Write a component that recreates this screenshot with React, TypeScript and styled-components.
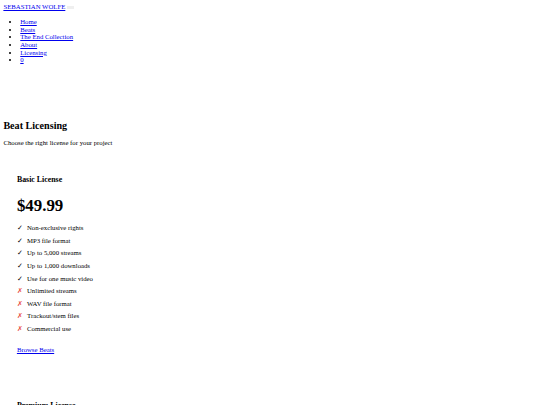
import React from "react";
import styled, { createGlobalStyle } from "styled-components";

const GlobalStyle = createGlobalStyle`
  html {
    zoom: 0.421875;
  }
  body {
    margin: 8px;
    font-family: "Liberation Serif", "Times New Roman", serif;
    font-size: 16px;
    color: #000;
    background: #fff;
  }
  a {
    color: #0000ee;
  }
`;

type Feature = { label: string; included: boolean };

const basicFeatures: Feature[] = [
  { label: "Non-exclusive rights", included: true },
  { label: "MP3 file format", included: true },
  { label: "Up to 5,000 streams", included: true },
  { label: "Up to 1,000 downloads", included: true },
  { label: "Use for one music video", included: true },
  { label: "Unlimited streams", included: false },
  { label: "WAV file format", included: false },
  { label: "Trackout/stem files", included: false },
  { label: "Commercial use", included: false },
];

const App: React.FC = () => {
  return (
    <>
      <GlobalStyle />
      <Header>
        <Brand>
          <a href="#">SEBASTIAN WOLFE</a> <MenuToggle />
        </Brand>
        <NavList>
          <li><a href="#">Home</a></li>
          <li><a href="#">Beats</a></li>
          <li><a href="#">The End Collection</a></li>
          <li><a href="#">About</a></li>
          <li><a href="#">Licensing</a></li>
          <li><a href="#">0</a></li>
        </NavList>
      </Header>

      <Main>
        <PageTitle>Beat Licensing</PageTitle>
        <Subtitle>Choose the right license for your project</Subtitle>

        <LicenseCard>
          <CardTitle>Basic License</CardTitle>
          <Price>$49.99</Price>
          <FeatureList>
            {basicFeatures.map((f) => (
              <FeatureItem key={f.label}>
                <Mark $included={f.included}>{f.included ? "✓" : "✗"}</Mark>
                {f.label}
              </FeatureItem>
            ))}
          </FeatureList>
          <a href="#">Browse Beats</a>
        </LicenseCard>

        <LicenseCard>
          <CardTitle>Premium License</CardTitle>
        </LicenseCard>
      </Main>
    </>
  );
};

export default App;

const Header = styled.header``;

const Brand = styled.div`
  line-height: 18.4px;
`;

const MenuToggle = styled.button`
  vertical-align: middle;
`;

const NavList = styled.ul`
  margin: 16px 0;
  padding-left: 40px;
  line-height: 18.2px;
`;

const Main = styled.main`
  padding-top: 96px;
`;

const PageTitle = styled.h2`
  font-size: 24px;
  margin: 20px 0;
`;

const Subtitle = styled.p`
  margin: 16px 0;
`;

const LicenseCard = styled.div`
  padding: 32px;
  margin-bottom: 30px;
`;

const CardTitle = styled.h3`
  font-size: 18.72px;
  margin: 20px 0;
`;

const Price = styled.div`
  font-size: 40px;
  font-weight: bold;
  margin: 30px 0 13px;
`;

const FeatureList = styled.ul`
  list-style: none;
  padding: 0;
  margin: 0 0 25px;
`;

const FeatureItem = styled.li`
  line-height: 30px;
`;

const Mark = styled.span<{ $included: boolean }>`
  display: inline-block;
  width: 24px;
  color: ${(p) => (p.$included ? "#000" : "#e74c3c")};
`;
